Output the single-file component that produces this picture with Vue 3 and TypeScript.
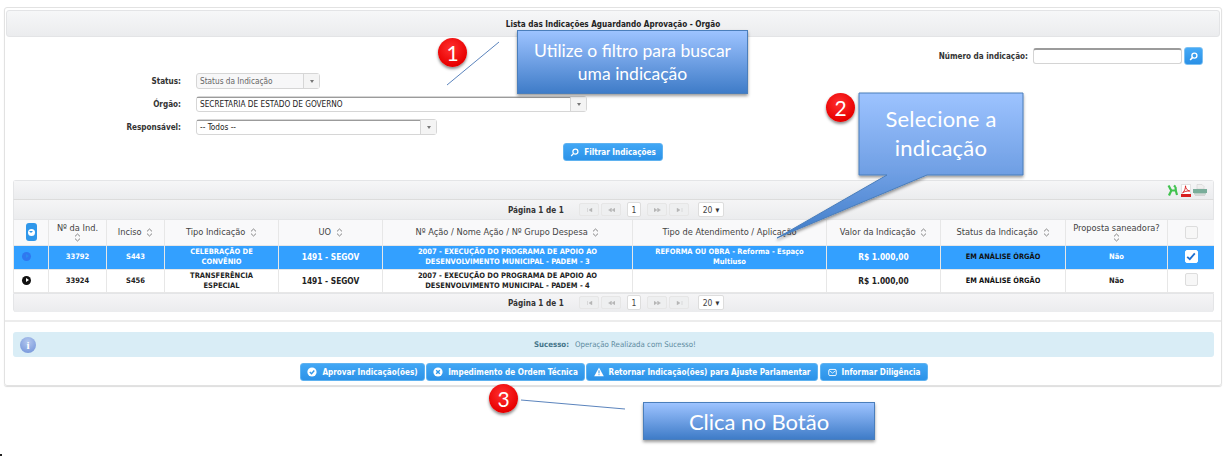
<script setup lang="ts">
interface Column { label: string; width: number; sort: boolean; wrap?: boolean }
const columns: Column[] = [
  { label: 'Nº da Ind.', width: 58, sort: true, wrap: true },
  { label: 'Inciso', width: 58, sort: true },
  { label: 'Tipo Indicação', width: 114, sort: true },
  { label: 'UO', width: 104, sort: true },
  { label: 'Nº Ação / Nome Ação / Nº Grupo Despesa', width: 250, sort: true },
  { label: 'Tipo de Atendimento / Aplicação', width: 194, sort: false },
  { label: 'Valor da Indicação', width: 114, sort: true },
  { label: 'Status da Indicação', width: 125, sort: true },
  { label: 'Proposta saneadora?', width: 102, sort: true, wrap: true },
]
const rows = [
  { id: '33792', inciso: 'S443', tipo: 'CELEBRAÇÃO DE CONVÊNIO', uo: '1491 - SEGOV', acao: '2007 - EXECUÇÃO DO PROGRAMA DE APOIO AO DESENVOLVIMENTO MUNICIPAL - PADEM - 3', atend: 'REFORMA OU OBRA - Reforma - Espaço Multiuso', selected: true },
  { id: '33924', inciso: 'S456', tipo: 'TRANSFERÊNCIA ESPECIAL', uo: '1491 - SEGOV', acao: '2007 - EXECUÇÃO DO PROGRAMA DE APOIO AO DESENVOLVIMENTO MUNICIPAL - PADEM - 4', atend: '', selected: false },
]
const navBack = ['M1.500 0v4M6 0 3 2l3 2z', 'M3.500 0 .5 2l3 2zM7 0 4 2l3 2z']
const navFwd = ['M0 0l3 2-3 2zM3.500 0l3 2-3 2z', 'M1 0l3 2-3 2zM6 0v4']
const pagers = ['top', 'foot']
</script>

<template>
  <div class="page">
    <section class="panel">
      <header class="panel-head">Lista das Indicações Aguardando Aprovação - Orgão</header>

      <div class="filters">
        <div class="num-row">
          <label>Número da indicação:</label>
          <span class="num-input"></span>
          <span class="num-btn">
            <svg width="9" height="9" viewBox="0 0 10 10"><circle cx="6" cy="4" r="2.8" fill="none" stroke="#fff" stroke-width="1.5"/><path d="M4 6 1.3 8.8" stroke="#fff" stroke-width="1.7"/></svg>
          </span>
        </div>
        <div class="field field-status">
          <label>Status:</label>
          <div class="select disabled w-status"><span class="val">Status da Indicação</span><span class="arrow"><i></i></span></div>
        </div>
        <div class="field">
          <label>Órgão:</label>
          <div class="select w-orgao"><span class="val">SECRETARIA DE ESTADO DE GOVERNO</span><span class="arrow"><i></i></span></div>
        </div>
        <div class="field">
          <label>Responsável:</label>
          <div class="select w-resp"><span class="val">-- Todos --</span><span class="arrow"><i></i></span></div>
        </div>
        <div class="filter-row">
          <button class="btn filter-btn">
            <svg width="9" height="9" viewBox="0 0 10 10"><circle cx="6" cy="4" r="2.8" fill="none" stroke="#fff" stroke-width="1.4"/><path d="M4 6 1.3 8.8" stroke="#fff" stroke-width="1.5"/></svg>
            Filtrar Indicações
          </button>
        </div>
      </div>

      <div class="grid">
        <div class="toolbar">
          <svg width="11" height="13" viewBox="0 0 11 13"><path d="M1.500 1.500C3 4 3 5 4.500 6.500 3.500 8 3 9.500 2 11.500M3 6.500h5M8.500 3c0 3 .5 5 1.500 8M8.500 3 7 1.500" fill="none" stroke="#41c24f" stroke-width="2.200"/></svg>
          <svg class="ic-pdf" width="10" height="13" viewBox="0 0 10 13"><rect x=".5" y=".5" width="9" height="12" fill="#fff" stroke="#e2e2e2"/><rect x="0" y="10" width="10" height="3" fill="#d81e1e"/><path d="M1.500 8.800C3.500 7.500 4.500 4.500 4.500 1.800 4.500 4.500 6.500 6.800 8.800 7 6 6.800 3.500 7.500 1.500 8.800z" fill="none" stroke="#d81e1e" stroke-width=".9"/></svg>
          <svg class="ic-print" width="14" height="13" viewBox="0 0 14 13"><path d="M4 .5h5l2 2V5H4z" fill="#efefef" stroke="#c8c8c8" stroke-width=".5"/><rect x="0" y="5" width="14" height="4" fill="#79ad9a"/><rect x="1" y="9" width="12" height="1.500" fill="#b9cdc5"/><rect x="2" y="10.500" width="10" height="1.500" fill="#d4d4d4"/></svg>
        </div>
        <div class="pager">
          <span class="pg-text">Página 1 de 1</span>
          <span class="pg-group">
            <span v-for="d in navBack" :key="d" class="pg-btn"><svg width="7" height="4" viewBox="0 0 7 4"><path :d="d" fill="#b5b5b5" stroke="#b5b5b5" stroke-width=".4"/></svg></span>
          </span>
          <span class="pg-cur">1</span>
          <span class="pg-group">
            <span v-for="d in navFwd" :key="d" class="pg-btn"><svg width="7" height="4" viewBox="0 0 7 4"><path :d="d" fill="#b5b5b5" stroke="#b5b5b5" stroke-width=".4"/></svg></span>
          </span>
          <span class="pg-size">20 <b>▼</b></span>
        </div>
        <table>
          <colgroup>
            <col style="width: 35px" />
            <col v-for="c in columns" :key="c.label" :style="{ width: c.width + 'px' }" />
            <col style="width: 47px" />
          </colgroup>
          <thead>
            <tr>
              <th>
                <span class="toggle-all"><i></i></span>
              </th>
              <th v-for="c in columns" :key="c.label" :class="{ wrapth: c.wrap }">
                {{ c.label }}
                <svg v-if="c.sort" class="sort" width="7" height="9" viewBox="0 0 7 9"><path d="M1 3.4 3.5 1 6 3.4M1 5.6 3.5 8 6 5.6" fill="none" stroke="#777" stroke-width=".9"/></svg>
              </th>
              <th><span class="check head-check"></span></th>
            </tr>
          </thead>
          <tbody>
            <tr v-for="r in rows" :key="r.id" :class="{ selected: r.selected }">
              <td class="exp-cell"><span class="expander"><i></i></span></td>
              <td>{{ r.id }}</td>
              <td>{{ r.inciso }}</td>
              <td>{{ r.tipo }}</td>
              <td class="big">{{ r.uo }}</td>
              <td>{{ r.acao }}</td>
              <td>{{ r.atend }}</td>
              <td class="big">R$ 1.000,00</td>
              <td class="status">EM ANÁLISE ÓRGÃO</td>
              <td>Não</td>
              <td>
                <span class="check" :class="{ on: r.selected }">
                  <svg v-if="r.selected" width="10" height="9" viewBox="0 0 10 9"><path d="M1.2 4.8 3.8 7.2 8.8 1.4" fill="none" stroke="#1f6fd0" stroke-width="1.8"/></svg>
                </span>
              </td>
            </tr>
          </tbody>
        </table>
        <div class="pager foot">
          <span class="pg-text">Página 1 de 1</span>
          <span class="pg-group">
            <span v-for="d in navBack" :key="d" class="pg-btn"><svg width="7" height="4" viewBox="0 0 7 4"><path :d="d" fill="#b5b5b5" stroke="#b5b5b5" stroke-width=".4"/></svg></span>
          </span>
          <span class="pg-cur">1</span>
          <span class="pg-group">
            <span v-for="d in navFwd" :key="d" class="pg-btn"><svg width="7" height="4" viewBox="0 0 7 4"><path :d="d" fill="#b5b5b5" stroke="#b5b5b5" stroke-width=".4"/></svg></span>
          </span>
          <span class="pg-size">20 <b>▼</b></span>
        </div>
      </div>

      <div class="sep"></div>

      <div class="alert">
        <span class="info">i</span>
        <div class="alert-text"><b>Sucesso:</b><span>Operação Realizada com Sucesso!</span></div>
      </div>

      <div class="actions">
        <button class="btn w1">
          <svg width="10" height="10" viewBox="0 0 10 10"><circle cx="5" cy="5" r="4.6" fill="#fff"/><path d="M2.8 5 4.5 6.7 7.3 3.5" fill="none" stroke="#2f97ea" stroke-width="1.4"/></svg>
          Aprovar Indicação(ões)
        </button>
        <button class="btn w2">
          <svg width="10" height="10" viewBox="0 0 10 10"><circle cx="5" cy="5" r="4.6" fill="#fff"/><path d="M3.2 3.2 6.8 6.8M6.8 3.2 3.2 6.8" stroke="#2f97ea" stroke-width="1.4"/></svg>
          Impedimento de Ordem Técnica
        </button>
        <button class="btn w3">
          <svg width="10" height="10" viewBox="0 0 10 10"><path d="M5 .6 9.8 9.2H.2z" fill="#fff"/><path d="M5 3.4v3M5 7.2v1" stroke="#2f97ea" stroke-width="1"/></svg>
          Retornar Indicação(ões) para Ajuste Parlamentar
        </button>
        <button class="btn w4">
          <svg width="9" height="9" viewBox="0 0 10 10"><rect x=".8" y="1.6" width="8.4" height="6.8" rx="1.4" fill="none" stroke="#fff"/><path d="M1.5 3 5 5.6 8.5 3" fill="none" stroke="#fff" stroke-width=".9"/></svg>
          Informar Diligência
        </button>
      </div>
    </section>

    <!-- Annotations laid over the screenshot -->
    <svg class="overlay" width="1229" height="456" viewBox="0 0 1229 456">
      <defs>
        <linearGradient id="callout2" gradientUnits="userSpaceOnUse" x1="0" y1="93" x2="0" y2="238">
          <stop offset="0" stop-color="#9dc3ff" />
          <stop offset="0.55" stop-color="#6f9fe4" />
          <stop offset="1" stop-color="#3f7cc8" />
        </linearGradient>
        <filter id="soft" x="-10%" y="-10%" width="120%" height="125%">
          <feDropShadow dx="0" dy="2" stdDeviation="1.6" flood-color="#000" flood-opacity=".4" />
        </filter>
      </defs>
      <path d="M499 42 447 85" stroke="#5b84bd" stroke-width="1" fill="none" />
      <path d="M521 400 625 409" stroke="#5b84bd" stroke-width="1" fill="none" />
      <path d="M859 93H1023V175H927L777 238 887 175H859Z" fill="url(#callout2)" stroke="#4a7ebb" filter="url(#soft)" />
    </svg>

    <div class="box box1">Utilize o filtro para buscar<br />uma indicação</div>
    <div class="box-text2">Selecione a<br />indicação</div>
    <div class="box box3">Clica no Botão</div>

    <span class="num n1">1</span>
    <span class="num n2">2</span>
    <span class="num n3">3</span>

    <span class="speck"></span>
  </div>
</template>

<style>
html, body { margin: 0; background: #fff; }
</style>

<style scoped>
.page {
  position: relative;
  width: 1229px;
  height: 456px;
  overflow: hidden;
  box-sizing: border-box;
  padding: 7px 7px 0 4px;
  font-family: "DejaVu Sans", Verdana, sans-serif;
  font-stretch: condensed;
  font-size: 8.1px;
  color: #222;
  background: #fff;
}
.panel {
  box-sizing: border-box;
  height: 379px;
  border: 1px solid #e2e2e2;
  border-radius: 3px;
  box-shadow: 0 1px 1px #ddd;
  padding: 2px 1px 0;
}
.panel-head {
  height: 27px;
  box-sizing: border-box;
  border: 1px solid #e3e4e6;
  border-radius: 3px;
  background: linear-gradient(#f6f7f8, #ebecee);
  display: flex;
  align-items: center;
  justify-content: center;
  font-weight: 700;
  color: #222;
}
.filters { height: 143px; box-sizing: border-box; padding-top: 10px; }
label { font-weight: 700; color: #333; }
.num-row {
  height: 18px;
  display: flex;
  align-items: center;
  justify-content: flex-end;
  padding-right: 17px;
}
.num-row label { margin-right: 5px; }
.num-input {
  width: 149px;
  height: 16px;
  box-sizing: border-box;
  border: 1px solid #d4d4d4;
  border-top: 2px solid #9b9b9b;
  border-radius: 3px;
  background: #fff;
}
.num-btn {
  width: 19px;
  height: 18px;
  margin-left: 2px;
  border-radius: 3px;
  background: linear-gradient(#45aaf7, #2a90e6);
  border: 1px solid #7cc0f2;
  box-sizing: border-box;
  display: flex;
  align-items: center;
  justify-content: center;
}
.field { display: flex; align-items: center; height: 16px; margin-top: 7px; }
.field-status { margin-top: 8px; }
.field label { width: 175px; text-align: right; margin-right: 15px; flex: none; }
.select {
  height: 16px;
  box-sizing: border-box;
  display: flex;
  align-items: stretch;
  border: 1px solid #d6d6d6;
  border-radius: 3px;
  background: #fff;
  font-size: 8.2px;
  color: #222;
}
.select.disabled { background: #f7f7f8; color: #666; }
.val {
  flex: 1;
  padding-left: 3px;
  display: flex;
  align-items: center;
  white-space: nowrap;
  box-shadow: inset 0 1px #9b9b9b;
}
.disabled .val { box-shadow: none; }
.arrow {
  width: 15px;
  flex: none;
  background: #f4f4f4;
  border-left: 1px solid #d6d6d6;
  display: flex;
  align-items: center;
  justify-content: center;
}
.arrow i { border: 2.5px solid transparent; border-top: 3px solid #777; border-bottom: 0; }
.w-status { width: 124px; }
.w-orgao { width: 391px; }
.w-resp { width: 241px; }
.filter-row { display: flex; margin-top: 8px; padding-left: 557px; }
.btn {
  height: 18px;
  box-sizing: border-box;
  border: 1px solid #5fb2f0;
  border-radius: 3px;
  background: linear-gradient(#41a7f5, #2c92e8);
  color: #fff;
  font: inherit;
  font-weight: 700;
  padding: 0;
  display: flex;
  align-items: center;
  justify-content: center;
  gap: 5px;
  white-space: nowrap;
}
.filter-btn { width: 100px; }

.grid {
  margin: 0 6px 0 7px;
  height: 132px;
  box-sizing: border-box;
  border-radius: 3px;
  overflow: hidden;
}
.toolbar {
  height: 20px;
  box-sizing: border-box;
  border: 1px solid #e4e5e7;
  border-bottom-color: #dcdcdc;
  background: linear-gradient(#f6f6f7, #ebecee);
  display: flex;
  align-items: center;
  justify-content: flex-end;
  gap: 3px;
  padding: 0 6px 0 0;
}
.ic-print { margin-left: -1px; }
.pager {
  height: 20px;
  box-sizing: border-box;
  background: linear-gradient(#f5f5f6, #ebecee);
  border: 1px solid #e4e5e7;
  border-top: 0;
  display: flex;
  align-items: center;
  padding-left: 494px;
}
.pg-text { width: 71px; font-weight: 700; color: #333; }
.pg-group { display: flex; gap: 2px; }
.pg-btn {
  width: 20px;
  height: 13px;
  box-sizing: border-box;
  display: flex;
  align-items: center;
  justify-content: center;
  background: #eeeff0;
  border: 1px solid #e6e6e6;
  border-radius: 2px;
}
.pg-cur {
  width: 14px;
  height: 15px;
  margin: 0 6px;
  box-sizing: border-box;
  display: flex;
  align-items: center;
  justify-content: center;
  background: #fff;
  border: 1px solid #ddd;
  border-radius: 2px;
  color: #444;
  font-size: 8.5px;
}
.pg-size {
  width: 26px;
  height: 15px;
  margin-left: 9px;
  box-sizing: border-box;
  display: flex;
  align-items: center;
  justify-content: center;
  gap: 3px;
  background: #fff;
  border: 1px solid #ddd;
  border-radius: 2px;
  color: #444;
  font-size: 8.5px;
}
.pg-size b { font-size: 5.5px; color: #333; }
.foot { border-top: 1px solid #e4e5e7; border-radius: 0 0 3px 3px; }
table {
  width: 1201px;
  table-layout: fixed;
  border-collapse: collapse;
}
th, td {
  padding: 0 8px;
  border: 1px solid #e7e7e7;
  border-top: 0;
  text-align: center;
  vertical-align: middle;
  line-height: 10px;
  box-sizing: border-box;
}
th {
  height: 25px;
  font-weight: 400;
  color: #444;
  background: #f9f9fa;
  font-size: 9.2px;
}
th.wrapth { padding: 0 2px; }
th.wrapth .sort { display: block; margin: 0 auto; }
.sort { vertical-align: -1.5px; margin-left: 2px; }
td {
  height: 23px;
  font-weight: 700;
  color: #222;
  font-size: 7.5px;
  background: #fff;
}
tr.selected td { height: 24px; background: #33a0ff; color: #fff; }
td.big { font-size: 8.3px; }
td.status { color: #111; font-size: 7.4px; }
tr.selected td.status { color: #111; }
th:first-child, td:first-child { padding: 0; }
th:last-child, td:last-child { padding: 0; }
td.exp-cell { text-align: left; padding-left: 8px; }
.toggle-all {
  width: 11px;
  height: 18px;
  border-radius: 3px;
  background: #2f97ea;
  display: inline-flex;
  align-items: center;
  justify-content: center;
  vertical-align: middle;
}
.toggle-all i {
  width: 7px;
  height: 7px;
  border-radius: 50%;
  background: #fff;
  position: relative;
}
.toggle-all i::after {
  content: "";
  position: absolute;
  left: 1.5px;
  top: 2.5px;
  border: 2px solid transparent;
  border-top: 2.5px solid #2f97ea;
  border-bottom: 0;
}
.expander {
  display: inline-block;
  width: 9px;
  height: 9px;
  border-radius: 50%;
  background: #111;
  position: relative;
  vertical-align: middle;
}
.expander i {
  position: absolute;
  left: 3.5px;
  top: 2px;
  border: 2.5px solid transparent;
  border-left: 3px solid #fff;
  border-right: 0;
}
tr.selected .expander { background: #2f78f0; }
tr.selected .expander i { border-left-color: #2a8cf0; }
.check {
  display: inline-flex;
  align-items: center;
  justify-content: center;
  width: 13px;
  height: 13px;
  box-sizing: border-box;
  border: 1px solid #ddd;
  border-radius: 2px;
  background: #f7f7f7;
  vertical-align: middle;
  margin-bottom: 2px;
}
.head-check { margin-bottom: 0; }
.check.on { background: #fff; border-color: #fff; }

.sep { height: 2px; margin: 8px -1px 0; background: #ececec; }
.alert {
  height: 25px;
  margin: 10px 6px 0 7px;
  border-radius: 3px;
  background: #d9edf6;
  display: flex;
  align-items: center;
}
.info {
  width: 16px;
  height: 16px;
  margin-left: 7px;
  border-radius: 50%;
  background: radial-gradient(circle at 50% 30%, #b3c7ee, #6e90d8);
  color: #fff;
  font-weight: 700;
  font-size: 11px;
  font-family: "Liberation Serif", serif;
  display: flex;
  align-items: center;
  justify-content: center;
}
.alert-text {
  margin-left: 498px;
  display: flex;
  gap: 6px;
  color: #5c8a9e;
  font-size: 7.8px;
}
.alert-text b { color: #44758a; }
.actions {
  display: flex;
  gap: 1px;
  margin-top: 6px;
  padding-left: 294px;
}
.w1 { width: 125px; }
.w2 { width: 159px; }
.w3 { width: 232px; }
.w4 { width: 108px; margin-left: 1px; }

.overlay { position: absolute; left: 0; top: 0; pointer-events: none; }
.box, .box-text2 {
  position: absolute;
  box-sizing: border-box;
  color: #fff;
  font-family: Lato, "Open Sans", sans-serif;
  text-align: center;
}
.box {
  border: 1px solid #4a7ebb;
  background: linear-gradient(#9dc3ff, #3f7cc8);
  box-shadow: 0 2px 3px rgba(0, 0, 0, .4);
  display: flex;
  align-items: center;
  justify-content: center;
}
.box1 { left: 517px; top: 30px; width: 231px; height: 64px; font-size: 17.5px; line-height: 23px; }
.box3 { left: 643px; top: 402px; width: 232px; height: 38px; font-size: 22px; }
.box-text2 {
  left: 859px;
  top: 104px;
  width: 164px;
  font-size: 22px;
  line-height: 29px;
  letter-spacing: .2px;
}
.num {
  position: absolute;
  width: 29px;
  height: 29px;
  border-radius: 50%;
  background: radial-gradient(circle at 45% 35%, #ff3030, #e80000 70%, #c00000);
  box-shadow: 0 2px 3px rgba(0, 0, 0, .45);
  color: #fff;
  font-family: Lato, "Open Sans", sans-serif;
  font-size: 21px;
  display: flex;
  align-items: center;
  justify-content: center;
}
.n1 { left: 438px; top: 38px; }
.n2 { left: 826px; top: 93px; }
.n3 { left: 489px; top: 384px; }
.speck { position: absolute; left: 0; top: 454px; width: 2px; height: 2px; background: #222; }
</style>
